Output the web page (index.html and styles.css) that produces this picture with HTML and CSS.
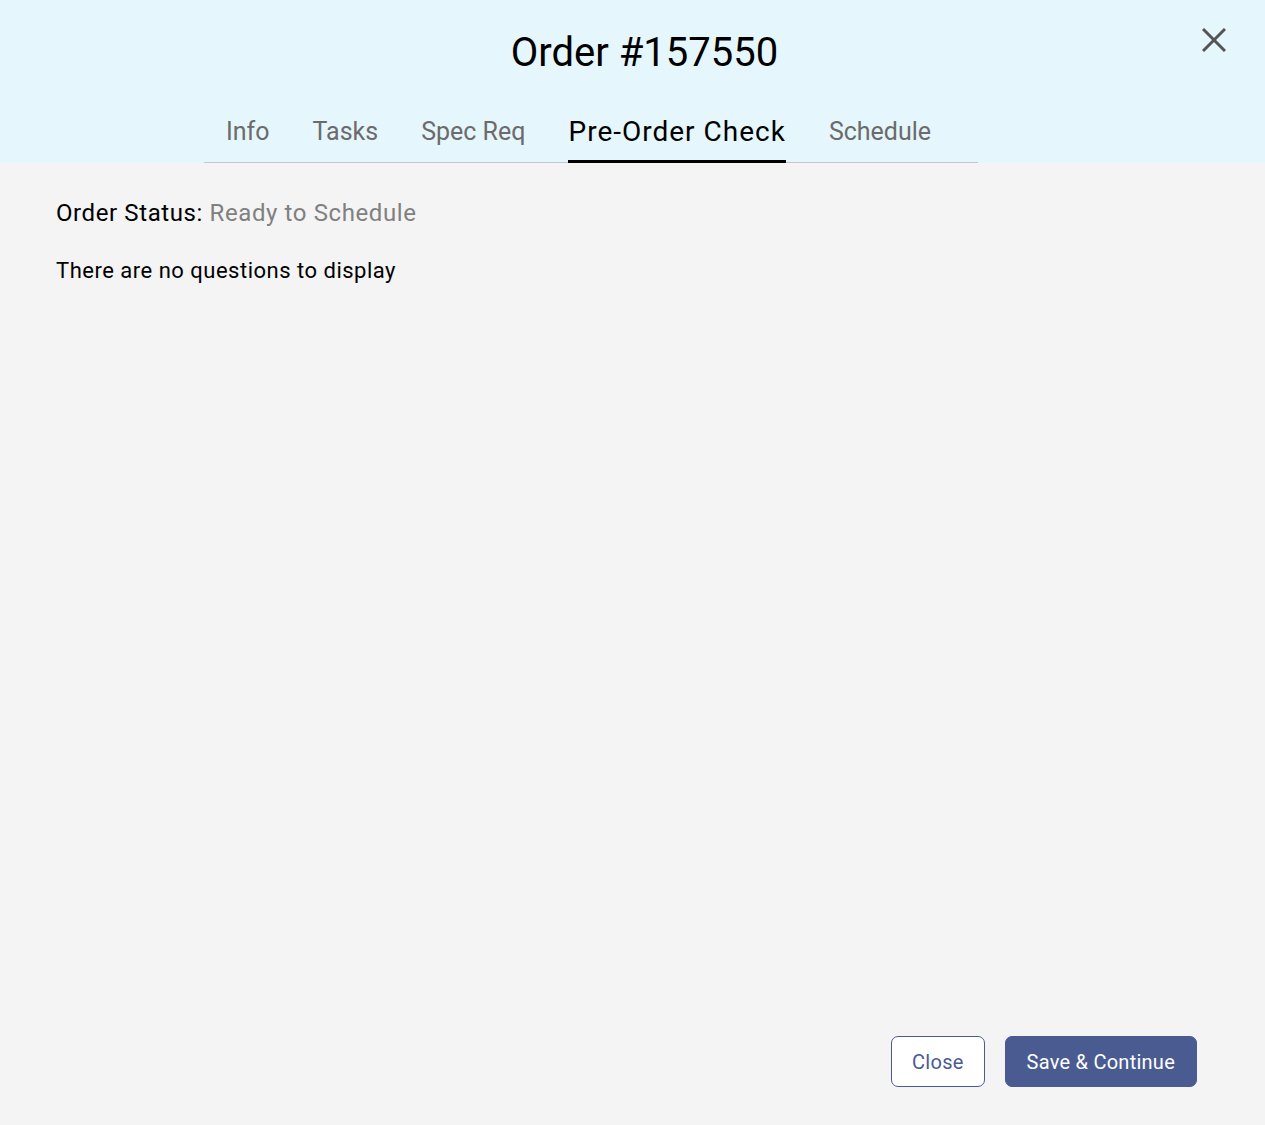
FILE: index.html
```html
<!DOCTYPE html>
<html lang="en">
<head>
<meta charset="utf-8">
<title>Order #157550</title>
<link rel="stylesheet" href="styles.css">
</head>
<body>
<div class="dialog">
  <header class="dialog-header">
    <h1 class="dialog-title">Order #157550</h1>
    <button class="close-icon" aria-label="Close">
      <svg width="24" height="24" viewBox="0 0 24 24"><path d="M1 1L23 23M23 1L1 23" stroke="#555" stroke-width="3" fill="none"/></svg>
    </button>
    <nav class="tabs">
      <a class="tab">Info</a>
      <a class="tab">Tasks</a>
      <a class="tab">Spec Req</a>
      <a class="tab active">Pre-Order Check</a>
      <a class="tab">Schedule</a>
    </nav>
  </header>
  <main class="dialog-body">
    <p class="status">Order Status: <span class="status-value">Ready to Schedule</span></p>
    <p class="empty">There are no questions to display</p>
  </main>
  <footer class="dialog-footer">
    <button class="btn btn-outline">Close</button>
    <button class="btn btn-primary">Save &amp; Continue</button>
  </footer>
</div>
</body>
</html>
```
FILE: styles.css
```css
* { box-sizing: border-box; }
html, body { margin: 0; padding: 0; }
body {
  font-family: Roboto, "Liberation Sans", sans-serif;
  background: #f4f4f4;
  color: #000;
}
.dialog {
  height: 1125px;
  display: flex;
  flex-direction: column;
}
.dialog-header {
  background: #e5f7fd;
  position: relative;
  height: 163px;
  display: flex;
  flex-direction: column;
  align-items: center;
}
.dialog-title {
  margin: 29px 0 0 24px;
  font-size: 40px;
  font-weight: 400;
  line-height: 48px;
}
.close-icon {
  position: absolute;
  top: 28px;
  right: 39px;
  background: none;
  border: 0;
  padding: 0;
  width: 24px;
  height: 24px;
  cursor: pointer;
}
.tabs {
  margin-top: auto;
  margin-left: -83px;
  display: flex;
  align-items: flex-end;
  gap: 43px;
  width: 774px;
  padding-left: 22px;
  border-bottom: 1px solid #c4c8cc;
}
.tab {
  font-size: 25px;
  line-height: 30px;
  padding-bottom: 13px;
  color: #6b6b6b;
  border-bottom: 3px solid transparent;
  margin-bottom: -1px;
}
.tab.active {
  font-size: 28px;
  letter-spacing: 1px;
  padding-bottom: 13px;
  color: #000;
  border-bottom-color: #000;
}
.dialog-body {
  flex: 1;
  padding: 36px 56px 0;
}
.status {
  margin: 0;
  font-size: 24px;
  line-height: 28px;
  letter-spacing: 0.6px;
}
.status-value { color: #808080; }
.empty {
  margin: 31px 0 0;
  font-size: 22px;
  line-height: 26px;
  letter-spacing: 0.5px;
}
.dialog-footer {
  display: flex;
  justify-content: flex-end;
  gap: 20px;
  padding: 0 68px 38px;
}
.btn {
  font-family: inherit;
  font-size: 20px;
  letter-spacing: 0.25px;
  height: 51px;
  border-radius: 7px;
  padding: 0 21px;
  cursor: pointer;
}
.btn-outline {
  padding: 0 20px;
  background: #fff;
  border: 1px solid #4a5b92;
  color: #4a5b92;
}
.btn-primary {
  background: #4a5b92;
  border: 1px solid #4a5b92;
  color: #fff;
}
```
